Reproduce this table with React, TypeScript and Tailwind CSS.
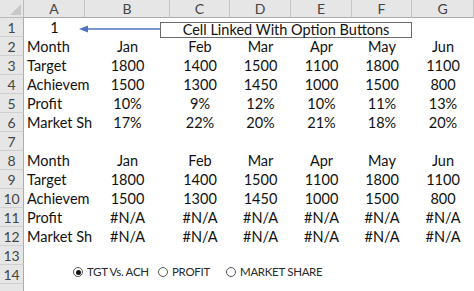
import React from "react";

const cols = ["A", "B", "C", "D", "E", "F", "G"];

type Row = string[];
const rows: Row[] = [
  ["1", "", "", "", "", "", ""],
  ["Month", "Jan", "Feb", "Mar", "Apr", "May", "Jun"],
  ["Target", "1800", "1400", "1500", "1100", "1800", "1100"],
  ["Achievem", "1500", "1300", "1450", "1000", "1500", "800"],
  ["Profit", "10%", "9%", "12%", "10%", "11%", "13%"],
  ["Market Sh", "17%", "22%", "20%", "21%", "18%", "20%"],
  ["", "", "", "", "", "", ""],
  ["Month", "Jan", "Feb", "Mar", "Apr", "May", "Jun"],
  ["Target", "1800", "1400", "1500", "1100", "1800", "1100"],
  ["Achievem", "1500", "1300", "1450", "1000", "1500", "800"],
  ["Profit", "#N/A", "#N/A", "#N/A", "#N/A", "#N/A", "#N/A"],
  ["Market Sh", "#N/A", "#N/A", "#N/A", "#N/A", "#N/A", "#N/A"],
  ["", "", "", "", "", "", ""],
  ["", "", "", "", "", "", ""],
];

function Radio({ checked, label }: { checked?: boolean; label: string }) {
  return (
    <div className="flex items-center gap-[4px]">
      <span className="w-[10px] h-[10px] rounded-full border border-[#555] bg-white flex items-center justify-center">
        {checked && <span className="w-[5px] h-[5px] rounded-full bg-[#111]" />}
      </span>
      <span className="text-[11.5px] text-[#2a2a2a] tracking-[-0.3px]">{label}</span>
    </div>
  );
}

export default function App() {
  return (
    <div
      className="relative w-[474px] h-[291px] overflow-hidden bg-white text-[#111]"
      style={{ fontFamily: "Lato, 'Liberation Sans', sans-serif" }}
    >
      <div className="grid grid-cols-[24px_61px_85px_60px_61px_61px_60px_62px] grid-rows-[18px_repeat(15,19px)]">
        {/* header corner */}
        <div className="relative bg-[#e6e6e6] border-r border-b border-[#b9b9b9]">
          <div className="absolute right-[2px] bottom-[2px] w-0 h-0 border-l-[11px] border-l-transparent border-b-[11px] border-b-[#c8c8c8]" />
        </div>
        {cols.map((c) => (
          <div
            key={c}
            className="bg-[#e6e6e6] border-r border-b border-[#c4c4c4] border-b-[#ababab] flex items-center justify-center text-[14px] text-[#444]"
          >
            {c}
          </div>
        ))}
        {rows.map((r, i) => (
          <React.Fragment key={i}>
            <div className="bg-[#e6e6e6] border-r border-[#ababab] border-b border-b-[#cfcfcf] flex items-center justify-center text-[14px] text-[#444]">
              {i + 1}
            </div>
            {r.map((v, j) => (
              <div
                key={j}
                className={
                  "flex items-center text-[14.5px] whitespace-nowrap overflow-visible " +
                  (j === 0 && i !== 0 ? "justify-start pl-[3px]" : "justify-center")
                }
              >
                {v}
              </div>
            ))}
          </React.Fragment>
        ))}
        <div className="bg-[#e6e6e6] border-r border-[#ababab]" />
      </div>

      {/* arrow */}
      <svg className="absolute left-[78px] top-[22px]" width="84" height="14" viewBox="0 0 84 14">
        <line x1="8" y1="7" x2="84" y2="7" stroke="#4f74c4" strokeWidth="1.3" />
        <polygon points="1,7 10,3.5 10,10.5" fill="#4f74c4" />
      </svg>

      {/* text box */}
      <div className="absolute left-[160px] top-[22px] w-[252px] h-[16px] border border-[#6b6b6b] bg-white flex items-center justify-center text-[14.5px] leading-none">
        Cell Linked With Option Buttons
      </div>

      {/* option buttons */}
      <div className="absolute left-[73px] top-[264px] h-[16px] flex items-center">
        <Radio checked label="TGT Vs. ACH" />
      </div>
      <div className="absolute left-[158px] top-[264px] h-[16px] flex items-center">
        <Radio label="PROFIT" />
      </div>
      <div className="absolute left-[226px] top-[264px] h-[16px] flex items-center">
        <Radio label="MARKET SHARE" />
      </div>
    </div>
  );
}
